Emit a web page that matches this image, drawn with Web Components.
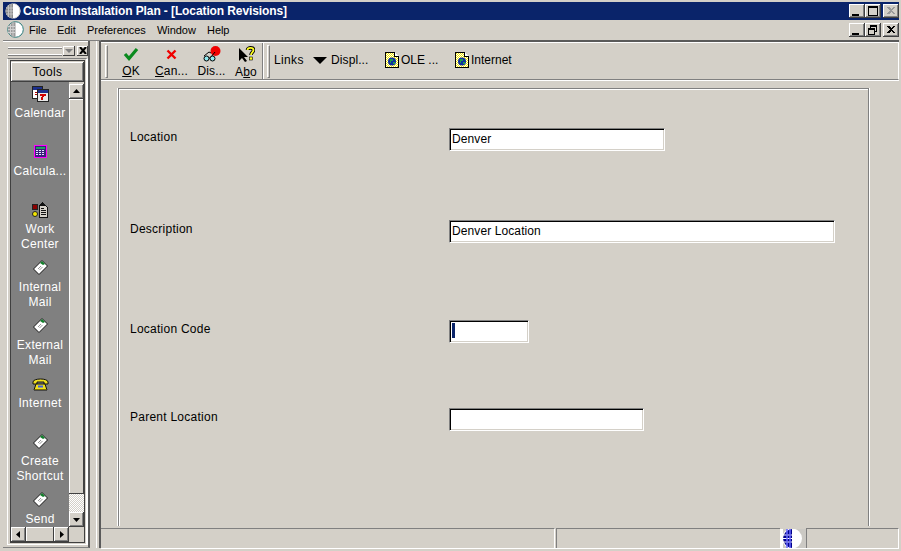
<!DOCTYPE html>
<html>
<head>
<meta charset="utf-8">
<title>Location Revisions</title>
<style>
  html, body { margin: 0; width: 901px; height: 551px; overflow: hidden; background: #d4d0c8; }
  body { font: 12px "Liberation Sans", Arial, sans-serif; color: #000; }
</style>
</head>
<body>
<install-window></install-window>

<script>
// ---------- icons ----------
const ICONS = {
  globeTitle: `<svg width="16" height="16" viewBox="0 0 16 16">
    <circle cx="8" cy="8" r="7.500" fill="#fff"/>
    <path d="M8 .5A7.500 7.500 0 0 0 8 15.500Z" fill="#8a8a8a"/>
    <path d="M1 5h7M1 8h7M1 11h7M3.500 2v12M6 1v14" stroke="#c4c4c4" fill="none"/>
    <path d="M9.500 .8A7.500 7.500 0 0 1 9.500 15.200" stroke="#d4d0c8" fill="none"/>
  </svg>`,
  globeMenu: `<svg width="17" height="17" viewBox="0 0 17 17">
    <circle cx="8.500" cy="8.500" r="7.800" fill="#fff" stroke="#2c7c7c"/>
    <path d="M8.500 1A7.500 7.500 0 0 0 8.500 16Z" fill="#9a9a9a"/>
    <path d="M1 5.500h7M1 8.500h7M1 11.500h7M3.500 3v11M6 1.500v14" stroke="#cfcfcf" fill="none"/>
  </svg>`,
  globeStatus: `<svg width="26" height="19" viewBox="0 0 26 19">
    <rect width="26" height="19" fill="#cbc9c4"/>
    <ellipse cx="12" cy="9.500" rx="10" ry="10" fill="#fff"/>
    <path d="M12 0A10 10 0 0 0 3 9.500A10 10 0 0 0 12 19Z" fill="#00008c"/>
    <path d="M3 6h9M3 9.500h9M3 13h9" stroke="#fff" fill="none"/>
    <path d="M7 0v19M10 0v19" stroke="#6a6aff" stroke-width="1.500" fill="none"/>
    <rect width="3" height="19" fill="#fff"/>
  </svg>`,
  check: `<svg width="16" height="14" viewBox="0 0 16 14">
    <path d="M2 7l4 4.500L14 2" stroke="#0a8a1e" stroke-width="3.200" fill="none"/>
  </svg>`,
  cross: `<svg width="11" height="11" viewBox="0 0 11 11"><path d="M1.500 1.500l8 8M9.500 1.500l-8 8" stroke="#f00000" stroke-width="2.400" fill="none"/></svg>`,
  glasses: `<svg width="18" height="16" viewBox="0 0 18 16">
    <circle cx="12.500" cy="5" r="5" fill="#f00000"/>
    <path d="M1 10l5-4 2 1M8 11l4-5" stroke="#000" fill="none"/>
    <circle cx="3.500" cy="12.500" r="2.500" fill="#8ee8ee" stroke="#000"/>
    <circle cx="9.500" cy="12.500" r="2.500" fill="#8ee8ee" stroke="#000"/>
    <path d="M6 12h1" stroke="#000"/>
  </svg>`,
  about: `<svg width="17" height="17" viewBox="0 0 17 17">
    <path d="M1 2v13l3-3 3 4 2-1-3-4h4Z" fill="#000"/>
    <path d="M9.500 4C9.500 1.200 15.500 1.200 15.500 4c0 2.300-2.500 2.300-2.500 5" stroke="#000" stroke-width="3.600" fill="none"/>
    <path d="M9.500 4C9.500 1.200 15.500 1.200 15.500 4c0 2.300-2.500 2.300-2.500 5" stroke="#ffff20" stroke-width="1.800" fill="none"/>
    <rect x="11.500" y="11" width="3" height="3" fill="#ffff20" stroke="#000" stroke-width=".6"/>
  </svg>`,
  docGlobe: `<svg width="14" height="16" viewBox="0 0 14 16" shape-rendering="crispEdges">
    <defs><pattern id="dth" width="2" height="2" patternUnits="userSpaceOnUse"><rect width="2" height="2" fill="#fff"/><rect width="1" height="1" fill="#f4e800"/><rect x="1" y="1" width="1" height="1" fill="#f4e800"/></pattern></defs>
    <path d="M.5.500h9l4 4v11H.5Z" fill="url(#dth)" stroke="#000"/>
    <path d="M9.500 .5v4h4" fill="#fff" stroke="#000"/>
    <circle cx="7" cy="9.500" r="4" fill="#0d2fa0" shape-rendering="auto"/>
    <path d="M5 7h3v2H6v2H5ZM8 10h2v2H8Z" fill="#1f9a50"/>
  </svg>`,
  calendar: `<svg width="17" height="16" viewBox="0 0 17 16" shape-rendering="crispEdges">
    <rect x=".5" y=".5" width="10" height="12" fill="#fff" stroke="#222"/>
    <rect x="1" y="1" width="9" height="3" fill="#1c2f8c"/>
    <path d="M3 6h4v1H3ZM3 8h4v1H3Z" fill="#b00000"/>
    <rect x="5.500" y="3.500" width="11" height="12" fill="#e8e8e8" stroke="#222"/>
    <rect x="6" y="4" width="10" height="3" fill="#1c2f8c"/>
    <path d="M8 8h6v2h-2v1h-1v3H9v-3h1v-1H8Z" fill="#d00000"/>
  </svg>`,
  calculator: `<svg width="13" height="13" viewBox="0 0 13 13" shape-rendering="crispEdges">
    <rect x=".5" y=".5" width="12" height="12" fill="#3a1f7a" stroke="#ff00ff"/>
    <rect x="2" y="2" width="9" height="2" fill="#20a060"/>
    <path d="M2 5h2v1H2ZM5 5h2v1H5ZM8 5h2v1H8ZM2 7h2v1H2ZM5 7h2v1H5ZM8 7h2v1H8ZM2 9h2v1H2ZM5 9h2v1H5ZM8 9h2v1H8Z" fill="#e8e0ff"/>
  </svg>`,
  workCenter: `<svg width="17" height="16" viewBox="0 0 17 16" shape-rendering="crispEdges">
    <rect x=".5" y="2.500" width="5" height="5" fill="#8a0000" stroke="#222"/>
    <circle cx="3" cy="12" r="2.500" fill="#f4e800" stroke="#222" shape-rendering="auto"/>
    <path d="M10 0h1v1h1v1h1v1H8V2h1V1h1Z" fill="#111"/>
    <path d="M7.500 3.500h6l2 2v10h-8Z" fill="#d4d0c8" stroke="#111"/>
    <path d="M9 6h3v1H9ZM9 8h5v1H9ZM9 10h5v1H9ZM9 12h5v1H9Z" fill="#111"/>
  </svg>`,
  mail: `<svg width="15" height="15" viewBox="0 0 15 15">
    <path d="M9 .5l5.500 5.500-8.500 8.500L.5 9Z" fill="#fff" stroke="#111"/>
    <path d="M9 1l3 3-2 1-3-2Z" fill="#12802c"/>
    <path d="M5 9l3-3M6.500 10l3-3" stroke="#999" fill="none"/>
  </svg>`,
  phone: `<svg width="17" height="14" viewBox="0 0 17 14">
    <path d="M1 5C1 1 16 1 16 5v2h-4V5H5v2H1Z" fill="#f0e020" stroke="#111"/>
    <path d="M4 7h9l2 6H2Z" fill="#f0e020" stroke="#111"/>
    <path d="M6 8.500h5v2H6Z" fill="#4060e0"/>
    <path d="M2.500 12.500h12" stroke="#807000"/>
  </svg>`
};

class WinIcon extends HTMLElement {
  connectedCallback() {
    this.attachShadow({ mode: 'open' }).innerHTML = `
      <style>:host { display: block; line-height: 0; } svg { display: block; }</style>
      ${ICONS[this.getAttribute('name')] || ''}`;
  }
}
customElements.define('win-icon', WinIcon);

// ---------- caption buttons ----------
const GLYPHS = {
  min: '<path d="M3 10h7v2H3Z" fill="#000"/>',
  max: '<path d="M3 2h10v10H3Z M4 4v7h8V4Z" fill-rule="evenodd" fill="#000"/>',
  restore: '<path d="M5 2h7v7h-2v3H3V5h2Zm1 2v1h4v3h1V4ZM4 7v4h5V7Z" fill-rule="evenodd" fill="#000"/>',
  close: '<path d="M4 3h2l2 2 2-2h2L9 6.500l3 3.500h-2L8 8l-2 2H4l3-3.500Z" fill="#000"/>',
  closeOff: '<path d="M4 3h2l2 2 2-2h2L9 6.500l3 3.500h-2L8 8l-2 2H4l3-3.500Z" fill="#9a9a9a"/>'
};

class CaptionButton extends HTMLElement {
  connectedCallback() {
    this.attachShadow({ mode: 'open' }).innerHTML = `
      <style>
        :host {
          display: block; width: 16px; height: 14px; background: #d4d0c8;
          box-shadow: inset -1px -1px #404040, inset 1px 1px #fff, inset -2px -2px #808080;
        }
        svg { display: block; }
      </style>
      <svg width="16" height="14" viewBox="0 0 16 14" shape-rendering="crispEdges">${GLYPHS[this.getAttribute('glyph')] || ''}</svg>`;
  }
}
customElements.define('caption-button', CaptionButton);

// ---------- title bar and menu bar ----------
class TitleBar extends HTMLElement {
  connectedCallback() {
    this.attachShadow({ mode: 'open' }).innerHTML = `
      <style>
        :host {
          display: flex; align-items: center; height: 18px; background: #0a246a; color: #fff;
          font: bold 12px "Liberation Sans", sans-serif; padding-left: 2px;
        }
        win-icon { margin-right: 2px; }
        .text { flex: 1; white-space: nowrap; letter-spacing: -.1px; }
        .btns { display: flex; }
        caption-button:last-child { margin-left: 2px; }
      </style>
      <win-icon name="globeTitle"></win-icon>
      <span class="text">Custom Installation Plan - [Location Revisions]</span>
      <span class="btns">
        <caption-button glyph="min"></caption-button>
        <caption-button glyph="max"></caption-button>
        <caption-button glyph="closeOff"></caption-button>
      </span>`;
  }
}
customElements.define('title-bar', TitleBar);

class MenuBar extends HTMLElement {
  connectedCallback() {
    this.attachShadow({ mode: 'open' }).innerHTML = `
      <style>
        :host {
          display: flex; align-items: center; height: 21px; padding: 0 0 1px 4px;
          font: 11px "Liberation Sans", sans-serif; letter-spacing: -.05px;
          box-sizing: border-box; border-bottom: 1px solid #808080;
        }
        win-icon { margin-right: 5px; }
        span.m:nth-of-type(1) { width: 28px; }
        span.m:nth-of-type(2) { width: 30px; }
        span.m:nth-of-type(3) { width: 70px; }
        span.m:nth-of-type(4) { width: 50px; }
        span.m:nth-of-type(5) { flex: 1; }
        .btns { display: flex; }
        caption-button:last-child { margin-left: 2px; }
      </style>
      <win-icon name="globeMenu"></win-icon>
      <span class="m">File</span><span class="m">Edit</span><span class="m">Preferences</span><span class="m">Window</span><span class="m">Help</span>
      <span class="btns">
        <caption-button glyph="min"></caption-button>
        <caption-button glyph="restore"></caption-button>
        <caption-button glyph="close"></caption-button>
      </span>`;
  }
}
customElements.define('menu-bar', MenuBar);

// ---------- tools dock ----------
class ToolItem extends HTMLElement {
  connectedCallback() {
    const lines = this.getAttribute('label').split('|').map(l => `<div>${l}</div>`).join('');
    this.attachShadow({ mode: 'open' }).innerHTML = `
      <style>
        :host {
          display: block; flex: none; height: 58px; width: 58px; color: #fff;
          font: 12px/15px "Liberation Sans", sans-serif; letter-spacing: .3px; text-align: center;
          white-space: nowrap;
        }
        .ic { height: 23px; display: flex; justify-content: center; align-items: center; margin-top: -4px; }
        .tx { margin-top: 1px; }
      </style>
      <div class="ic"><win-icon name="${this.getAttribute('icon')}"></win-icon></div>
      <div class="tx">${lines}</div>`;
  }
}
customElements.define('tool-item', ToolItem);

const arrow = (d) => {
  const paths = {
    up: 'M3 8h7L6.500 4Z',
    down: 'M3 5h7L6.500 9Z',
    left: 'M8 3v7L4 6.500Z',
    right: 'M5 3v7l4-3.500Z'
  };
  return `<svg width="13" height="13" viewBox="0 0 13 13"><path d="${paths[d]}" fill="#000"/></svg>`;
};

class ScrollButton extends HTMLElement {
  connectedCallback() {
    this.attachShadow({ mode: 'open' }).innerHTML = `
      <style>
        :host {
          display: flex; align-items: center; justify-content: center; flex: none;
          width: 15px; height: 15px; background: #d4d0c8;
          box-shadow: inset -1px -1px #404040, inset 1px 1px #fff, inset -2px -2px #808080;
        }
        svg { display: block; }
      </style>
      ${arrow(this.getAttribute('dir'))}`;
  }
}
customElements.define('scroll-button', ScrollButton);

class ToolsDock extends HTMLElement {
  connectedCallback() {
    this.attachShadow({ mode: 'open' }).innerHTML = `
      <style>
        :host {
          display: block; width: 87px; box-sizing: border-box;
          border-right: 2px solid #5a5a5a; border-bottom: 1px solid #808080;
          box-shadow: inset 0 1px #fff;
          padding: 4px 0 2px 4px;
        }
        .head { display: flex; align-items: center; height: 11px; padding: 0 0 0 1px; margin-bottom: 2px; }
        .grip {
          width: 54px; height: 6px; margin-right: 1px;
          border-top: 1px solid #fff; border-bottom: 1px solid #fff;
          box-shadow: 0 1px #808080, inset 0 1px #808080;
        }
        .mini {
          width: 12px; height: 10px; margin-right: 2px; background: #d4d0c8;
          box-shadow: inset -1px -1px #404040, inset 1px 1px #fff;
          display: flex; align-items: center; justify-content: center;
        }
        .mini:last-child { margin-right: 0; width: 11px; }
        .frame {
          box-sizing: border-box; height: 487px; width: 81px;
          border: 1px solid #fff; border-top-color: #808080; border-right-width: 2px; padding: 1px 1px 1px 2px;
        }
        .inner {
          height: 100%; box-sizing: border-box; width: 75px;
          border: 1px solid #404040;
          display: flex; flex-direction: column;
        }
        .tools {
          flex: none; height: 20px; margin-top: 1px; text-align: center; background: #d4d0c8;
          font: 12px/20px "Liberation Sans", sans-serif; letter-spacing: .35px;
          box-shadow: inset -1px -1px #404040, inset 1px 1px #fff, inset -2px -2px #808080;
        }
        .body { flex: 1; display: grid; grid-template-columns: 58px 15px; grid-template-rows: 1fr 15px; min-height: 0; }
        .list { background: #808080; overflow: hidden; display: flex; flex-direction: column; padding-top: 4px; }
        .vbar { display: flex; flex-direction: column; padding-top: 2px; }
        .thumb {
          flex: none; height: 395px; background: #d4d0c8;
          box-shadow: inset -1px -1px #404040, inset 1px 1px #fff;
        }
        .dither {
          flex: 1;
          background: repeating-conic-gradient(#fff 0 25%, #d4d0c8 0 50%) 0 0 / 2px 2px;
        }
        .hbar { display: flex; }
        .hthumb {
          flex: 1; background: #d4d0c8;
          box-shadow: inset -1px -1px #404040, inset 1px 1px #fff;
        }
      </style>
      <div class="head">
        <div class="grip"></div>
        <div class="mini"><svg width="8" height="6"><path d="M0 1h8L4 5Z" fill="#808080"/></svg></div>
        <div class="mini"><svg width="8" height="7"><path d="M1 0l6 7M7 0l-6 7" stroke="#000" stroke-width="2"/></svg></div>
      </div>
      <div class="frame">
        <div class="inner">
          <div class="tools">Tools</div>
          <div class="body">
            <div class="list">
              <tool-item icon="calendar" label="Calendar"></tool-item>
              <tool-item icon="calculator" label="Calcula..."></tool-item>
              <tool-item icon="workCenter" label="Work|Center"></tool-item>
              <tool-item icon="mail" label="Internal|Mail"></tool-item>
              <tool-item icon="mail" label="External|Mail"></tool-item>
              <tool-item icon="phone" label="Internet"></tool-item>
              <tool-item icon="mail" label="Create|Shortcut"></tool-item>
              <tool-item icon="mail" label="Send"></tool-item>
            </div>
            <div class="vbar">
              <scroll-button dir="up"></scroll-button>
              <div class="thumb"></div>
              <div class="dither"></div>
              <scroll-button dir="down"></scroll-button>
            </div>
            <div class="hbar">
              <scroll-button dir="left"></scroll-button>
              <div class="hthumb"></div>
              <scroll-button dir="right"></scroll-button>
            </div>
            <div></div>
          </div>
        </div>
      </div>`;
  }
}
customElements.define('tools-dock', ToolsDock);

// ---------- toolbar ----------
class ToolButton extends HTMLElement {
  connectedCallback() {
    this.attachShadow({ mode: 'open' }).innerHTML = `
      <style>
        :host {
          display: flex; flex-direction: column; align-items: center; flex: none;
          width: ${this.getAttribute('w')}px; font: 12px/14px "Liberation Sans", sans-serif; letter-spacing: .15px;
        }
        .ic { height: 20px; display: flex; align-items: center; justify-content: center; margin-top: 1px; }
        u { text-underline-offset: 1px; }
        .tx { margin-top: 2px; white-space: nowrap; }
      </style>
      <div class="ic"><win-icon name="${this.getAttribute('icon')}"></win-icon></div>
      <div class="tx"><slot></slot></div>`;
  }
}
customElements.define('tool-button', ToolButton);

class LinkItem extends HTMLElement {
  connectedCallback() {
    this.attachShadow({ mode: 'open' }).innerHTML = `
      <style>
        :host {
          display: flex; align-items: center; gap: 2px; flex: none;
          width: ${this.getAttribute('w')}px; white-space: nowrap;
          font: 12px "Liberation Sans", sans-serif;
        }
      </style>
      <slot></slot>`;
  }
}
customElements.define('link-item', LinkItem);

class ToolBar extends HTMLElement {
  connectedCallback() {
    this.attachShadow({ mode: 'open' }).innerHTML = `
      <style>
        :host {
          display: flex; align-items: stretch; height: 38px; box-sizing: border-box;
          border-top: 1px solid #fff; border-right: 1px solid #fff; border-bottom: 1px solid #808080;
          box-shadow: 0 1px #fff;
          padding: 2px 0 1px 4px;
        }
        .handle {
          flex: none; border: 1px solid #808080; border-left-color: #fff; border-top-color: #fff;
          margin: 0 4px 0 0; width: 1px;
        }
        .sep { flex: none; width: 1px; background: #808080; margin: -2px 4px -1px 0; box-shadow: 1px 0 #fff; }
        .first { display: flex; width: 150px; flex: none; }
        .links { display: flex; align-items: center; padding-bottom: 3px; }
        .tri { display: block; }
      </style>
      <div class="handle"></div>
      <div class="first">
        <tool-button icon="check" w="38"><u>O</u>K</tool-button>
        <tool-button icon="cross" w="43"><u>C</u>an...</tool-button>
        <tool-button icon="glasses" w="37">Dis...</tool-button>
        <tool-button icon="about" w="32">A<u>b</u>o</tool-button>
      </div>
      <div class="sep"></div>
      <div class="handle"></div>
      <div class="links">
        <link-item w="39"><span style="letter-spacing:.35px">Links</span></link-item>
        <link-item w="72"><svg class="tri" width="14" height="7"><path d="M0 0h14L7 7Z" fill="#000"/></svg><span style="margin-left:2px;letter-spacing:.1px">Displ...</span></link-item>
        <link-item w="70"><win-icon name="docGlobe"></win-icon>OLE ...</link-item>
        <link-item w="60"><win-icon name="docGlobe"></win-icon>Internet</link-item>
      </div>`;
  }
}
customElements.define('tool-bar', ToolBar);

// ---------- form ----------
class FormField extends HTMLElement {
  connectedCallback() {
    const caret = this.hasAttribute('focused') ? '<i></i>' : '';
    this.attachShadow({ mode: 'open' }).innerHTML = `
      <style>
        :host {
          display: grid; grid-template-columns: 319px auto; align-items: start;
          font: 12px "Liberation Sans", sans-serif; letter-spacing: .25px;
        }
        label { display: block; line-height: 16px; padding-top: 1px; }
        .box {
          box-sizing: border-box; width: ${this.getAttribute('w')}px; height: 23px; background: #fff;
          border: 1px solid #808080; border-right-color: #fff; border-bottom-color: #fff;
          box-shadow: inset 1px 1px #000, inset -1px -1px #d4d0c8;
          padding: 3px 0 0 2px; line-height: 15px; position: relative; letter-spacing: .1px;
        }
        i { display: block; position: absolute; left: 2px; top: 2px; width: 3px; height: 15px; background: #0a246a; }
      </style>
      <label><slot></slot></label>
      <div class="box">${this.getAttribute('value') || ''}${caret}</div>`;
  }
}
customElements.define('form-field', FormField);

class FormPanel extends HTMLElement {
  connectedCallback() {
    this.attachShadow({ mode: 'open' }).innerHTML = `
      <style>
        :host {
          display: grid; grid-template-rows: 92px 100px 88px 1fr;
          flex: 1; min-height: 0; margin: 8px 30px 2px 17px; box-sizing: border-box;
          border: 1px solid #808080; border-bottom: 0;
          box-shadow: -1px 0 #fff, 1px 0 #fff, inset 1px 1px #fff;
          padding: 39px 0 0 11px;
        }
      </style>
      <slot></slot>`;
  }
}
customElements.define('form-panel', FormPanel);

// ---------- status bar ----------
class StatusBar extends HTMLElement {
  connectedCallback() {
    this.attachShadow({ mode: 'open' }).innerHTML = `
      <style>
        :host { display: flex; height: 21px; flex: none; box-sizing: border-box; border-bottom: 1px solid #fff; }
        .seg {
          box-sizing: border-box; border-top: 1px solid #808080; border-left: 1px solid #808080;
          border-right: 1px solid #fff;
        }
        .a { width: 454px; border-left: 0; }
        .b { width: 224px; margin-left: 1px; flex: none; border-right: 0; }
        .c { flex: 1; }
        win-icon { margin-top: 1px; }
      </style>
      <div class="seg a"></div>
      <div class="seg b"></div>
      <win-icon name="globeStatus"></win-icon>
      <div class="seg c"></div>`;
  }
}
customElements.define('status-bar', StatusBar);

// ---------- window ----------
class InstallWindow extends HTMLElement {
  connectedCallback() {
    this.attachShadow({ mode: 'open' }).innerHTML = `
      <style>
        :host {
          display: flex; flex-direction: column; box-sizing: border-box;
          width: 901px; height: 551px; padding: 2px 2px 0 3px;
        }
        .main { flex: 1; min-height: 0; display: flex; padding-bottom: 3px; }
        .split {
          flex: none; width: 11px; box-sizing: border-box;
          border-right: 2px solid #5a5a5a;
        }
        .split::before { content: ""; display: block; width: 1px; height: 100%; margin-left: 6px; background: #fff; }
        .right { flex: 1; min-width: 0; display: flex; flex-direction: column; margin-bottom: -1px; border-top: 1px solid #5a5a5a; box-shadow: 0 -1px #5a5a5a; }
      </style>
      <title-bar></title-bar>
      <menu-bar></menu-bar>
      <div class="main">
        <tools-dock></tools-dock>
        <div class="split"></div>
        <div class="right">
          <tool-bar></tool-bar>
          <form-panel>
            <form-field w="216" value="Denver">Location</form-field>
            <form-field w="386" value="Denver Location">Description</form-field>
            <form-field w="80" focused>Location Code</form-field>
            <form-field w="195">Parent Location</form-field>
          </form-panel>
          <status-bar></status-bar>
        </div>
      </div>`;
  }
}
customElements.define('install-window', InstallWindow);
</script>
</body>
</html>
